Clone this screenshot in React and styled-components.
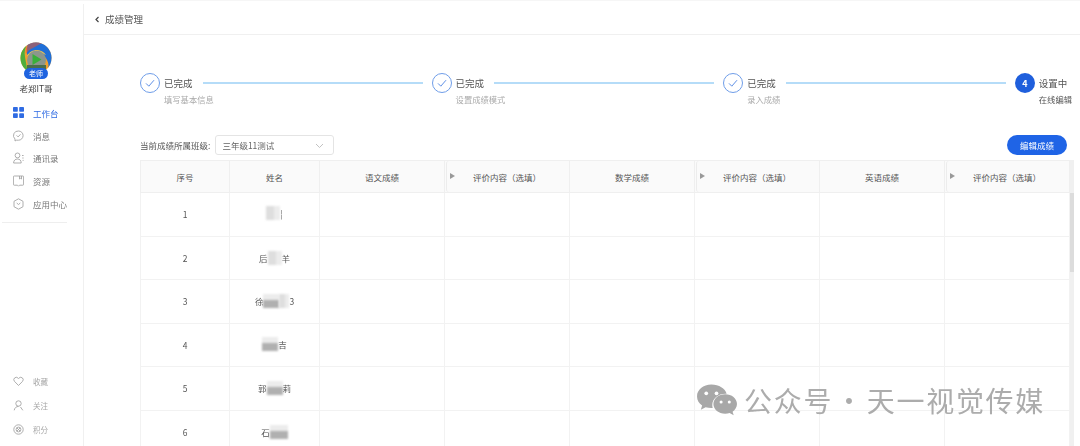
import React from 'react';
import styled, { createGlobalStyle } from 'styled-components';

const GlobalStyle = createGlobalStyle`
  html, body { margin: 0; padding: 0; height: 100%; background: #fff; overflow: hidden; }
  body { font-family: "Noto Sans CJK SC", "Noto Sans", sans-serif; color: #555; }
`;

const Page = styled.div`
  position: relative;
  display: flex;
  width: 1080px;
  height: 446px;
  box-sizing: border-box;
  padding-top: 3px;
  overflow: hidden;
  border-top: 1px solid #f6f6f6;
  filter: blur(0.35px);
`;

const Sidebar = styled.aside`
  width: 84px;
  flex: none;
  display: flex;
  flex-direction: column;
  border-right: 1px solid #f0f0f0;
  box-sizing: border-box;
  padding-top: 38px;
`;

const AvatarWrap = styled.div`
  position: relative;
  width: 32px;
  height: 36px;
  margin: 0 auto 0 20px;
`;

const RoleBadge = styled.span`
  position: absolute;
  left: 4px;
  top: 26px;
  width: 24px;
  height: 11px;
  border-radius: 6px;
  background: #1f64e0;
  color: #fff;
  font-size: 7px;
  line-height: 11px;
  text-align: center;
`;

const UserName = styled.div`
  margin-top: 3px;
  width: 72px;
  text-align: center;
  font-size: 8.5px;
  line-height: 14px;
  color: #444;
`;

const Nav = styled.nav`
  display: flex;
  flex-direction: column;
  margin-top: 6.5px;
  padding-bottom: 7px;
  margin-right: 16px;
  margin-left: 2px;
  border-bottom: 1px solid #eee;
`;

const NavItem = styled.div`
  display: flex;
  align-items: center;
  gap: 9px;
  height: 22.7px;
  padding-left: 11px;
  font-size: 8.5px;
  color: ${p => (p.$active ? '#2f6be3' : '#777')};
  svg { flex: none; }
`;

const BottomNav = styled.nav`
  margin-top: auto;
  display: flex;
  flex-direction: column;
  padding: 0 0 5px 13px;
`;

const BottomItem = styled.div`
  display: flex;
  align-items: center;
  gap: 9px;
  height: 24px;
  font-size: 7.5px;
  color: #a5a5a5;
`;

const Main = styled.main`
  flex: 1;
  min-width: 0;
  display: flex;
  flex-direction: column;
`;

const TopBar = styled.header`
  height: 31px;
  flex: none;
  display: flex;
  align-items: center;
  gap: 3px;
  padding-left: 9px;
  box-sizing: border-box;
  border-bottom: 1px solid #f0f0f0;
  font-size: 9.5px;
  color: #555;
`;

const Content = styled.div`
  padding: 38px 0 0 56px;
  width: 996px;
  box-sizing: border-box;
`;

const Steps = styled.div`
  display: flex;
  align-items: flex-start;
  width: 932px;
  height: 62px;
`;

const Step = styled.div`
  display: flex;
  flex: ${p => (p.$last ? 'none' : '1')};
  gap: 4px;
  margin-right: ${p => (p.$last ? '0' : '9px')};
`;

const StepCircle = styled.span`
  flex: none;
  width: 20px;
  height: 20px;
  box-sizing: border-box;
  border-radius: 50%;
  border: ${p => (p.$current ? 'none' : '1px solid #6f9de8')};
  background: ${p => (p.$current ? '#1f5fdc' : '#fff')};
  color: #fff;
  font-size: 9px;
  font-weight: 700;
  display: flex;
  align-items: center;
  justify-content: center;
`;

const StepBody = styled.div`
  flex: 1;
  min-width: 0;
`;

const StepHead = styled.div`
  display: flex;
  align-items: center;
  gap: 10px;
  height: 20px;
  font-size: 9.5px;
  color: #555;
  white-space: nowrap;
`;

const StepLine = styled.i`
  flex: 1;
  height: 2px;
  background: #b5dcf8;
`;

const StepNote = styled.div`
  font-size: 8.3px;
  line-height: 12px;
  white-space: nowrap;
  color: ${p => (p.$current ? '#555' : '#aaa')};
`;

const Toolbar = styled.div`
  display: flex;
  align-items: center;
  width: 927px;
  height: 20px;
  font-size: 8.5px;
  color: #555;
`;

const SelectBox = styled.div`
  width: 119px;
  height: 20px;
  margin-left: 5px;
  box-sizing: border-box;
  display: flex;
  align-items: center;
  justify-content: space-between;
  padding: 0 9px 0 6px;
  border: 1px solid #e4e4e4;
  border-radius: 3px;
  color: #666;
`;

const EditButton = styled.button`
  margin-left: auto;
  width: 60px;
  height: 20px;
  padding: 0;
  border: none;
  border-radius: 10px;
  background: #1f64e6;
  color: #fff;
  font: inherit;
  font-size: 8.5px;
`;

const TableWrap = styled.div`
  display: flex;
  width: 933px;
  margin-top: 5px;
`;

const Table = styled.table`
  width: 929px;
  flex: none;
  border-collapse: collapse;
  table-layout: fixed;
`;

const ScrollTrack = styled.div`
  width: 4px;
  flex: none;
  background: #f0f0f0;
`;

const ScrollThumb = styled.div`
  height: 79px;
  margin-top: 33px;
  background: #dcdcdc;
`;

const Th = styled.th`
  position: relative;
  height: 31px;
  padding: 0;
  background: #fafafa;
  border: 1px solid #efefef;
  font-size: 8.5px;
  font-weight: 400;
  color: #555;
`;

const FoldEdge = styled.span`
  position: absolute;
  left: 1px;
  top: 0;
  bottom: 0;
  width: 6px;
  border-left: 1px solid #ececec;
  border-radius: 3px 0 0 3px;
`;

const Caret = styled.span`
  position: absolute;
  left: 5px;
  top: 12px;
  width: 0;
  height: 0;
  border-left: 5px solid #999;
  border-top: 3.5px solid transparent;
  border-bottom: 3.5px solid transparent;
`;

const Td = styled.td`
  height: 42.5px;
  padding: 0;
  border: 1px solid #f2f2f2;
  text-align: center;
  font-size: 8.5px;
  color: #555;
`;

const NameCell = styled.div`
  display: inline-flex;
  align-items: center;
  justify-content: center;
`;

const Mosaic = styled.span`
  display: inline-block;
  width: ${p => p.$w}px;
  height: 14px;
  background: ${p => p.$dark
    ? 'linear-gradient(#ececec 45%, #b0b0b0 45%)'
    : 'linear-gradient(90deg, #dedede 60%, #ececec 60%)'};
  filter: blur(0.8px);
`;

const Watermark = styled.div`
  position: absolute;
  left: 696px;
  top: 381px;
  display: flex;
  align-items: center;
  gap: 6px;
  font-size: 28px;
  line-height: 36px;
  letter-spacing: 1.7px;
  color: #acacac;
  white-space: nowrap;
`;

const Dot = styled.span`
  margin: 0 2px;
`;

const NAV = [
  { label: '工作台', icon: 'grid', active: true },
  { label: '消息', icon: 'msg' },
  { label: '通讯录', icon: 'user' },
  { label: '资源', icon: 'res' },
  { label: '应用中心', icon: 'hex' },
];

const NavIcon = ({ type }) => {
  if (type === 'grid') {
    return (
      <svg width="11" height="11" viewBox="0 0 11 11" fill="#2f6be3">
        <rect width="4.8" height="4.8" rx="0.8" />
        <rect x="6.2" width="4.8" height="4.8" rx="0.8" />
        <rect y="6.2" width="4.8" height="4.8" rx="0.8" />
        <rect x="6.2" y="6.2" width="4.8" height="4.8" rx="0.8" />
      </svg>
    );
  }
  const s = { fill: 'none', stroke: '#a5a5a5', strokeWidth: 0.9 };
  return (
    <svg width="11" height="12" viewBox="0 0 11 12" {...s}>
      {type === 'msg' && (
        <>
          <path d="M5.5 1a4.6 4.6 0 0 1 0 9.2H3.4L2 11V9A4.6 4.6 0 0 1 5.5 1z" />
          <path d="M3.6 5.4l1.5 1.5 2.4-2.6" />
        </>
      )}
      {type === 'user' && (
        <>
          <circle cx="4.5" cy="3.4" r="2.4" />
          <path d="M.6 11c0-2.6 1.7-4 3.9-4s3.7 1.4 3.7 4z" />
          <path d="M9 3.5h1.6M9.3 6h1.3M9.6 8.4h1" />
        </>
      )}
      {type === 'res' && (
        <>
          <path d="M1.2 1h8.6a.8.8 0 0 1 .8.8v7.6a.8.8 0 0 1-.8.8H6.5l-1 1-1-1H1.2a.8.8 0 0 1-.8-.8V1.8a.8.8 0 0 1 .8-.8z" />
          <path d="M6.5 1v3l1-.7 1 .7V1" />
        </>
      )}
      {type === 'hex' && (
        <>
          <path d="M5.5.8l4.5 2.5v5.4l-4.5 2.5-4.5-2.5V3.3z" />
          <path d="M3.7 5l1.8 1.5L7.3 5" />
        </>
      )}
    </svg>
  );
};

const BottomIcon = ({ type }) => {
  const s = { fill: 'none', stroke: '#a5a5a5', strokeWidth: 0.9 };
  return (
    <svg width="11" height="11" viewBox="0 0 11 11" {...s}>
      {type === 'heart' && (
        <path d="M5.5 9.5L1.500 5.400a2.500 2.500 0 0 1 0-3.400 2.600 2.600 0 0 1 3.500 0l.5.500.5-.5a2.600 2.600 0 0 1 3.500 0 2.500 2.500 0 0 1 0 3.400z" />
      )}
      {type === 'person' && (
        <>
          <circle cx="5.5" cy="3.5" r="2.7" />
          <path d="M1.2 10.3c.4-2.4 2.1-3.900 4.300-3.900M7.500 7l2.300 3.300" />
        </>
      )}
      {type === 'points' && (
        <>
          <circle cx="5.5" cy="5.5" r="4.7" />
          <circle cx="5.5" cy="5.5" r="2.4" />
          <path d="M3.8 3.8l3.4 3.4M7.2 3.8L3.8 7.2" />
        </>
      )}
    </svg>
  );
};

const Logo = () => (
  <svg width="32" height="32" viewBox="0 0 32 32">
    <defs>
      <clipPath id="logoClip">
        <circle cx="16" cy="16" r="15.5" />
      </clipPath>
    </defs>
    <g clipPath="url(#logoClip)">
      <rect width="32" height="32" fill="#f0a030" />
      <path d="M0 32V12C1 7 4 3 8 1c-3 4-4 9-3 14l3 17z" fill="#4fae3c" />
      <path d="M8 0h14c5 2 8 6 10 11v21h-6c2-3 4-9 1-14-2-4-6-7-12-7-3 0-6 .6-8 2 0-5 0-9 1-13z" fill="#1f6fd8" />
      <path d="M9 1c4-1.5 9-1.5 13 0L13 6C10 7 8 9 6 12 5 8 6 4 9 1z" fill="#e8552e" opacity="0.55" />
      <path d="M7 14c2-4 6-6 10-6 4 .2 7 2 9 5-5-2.5-12-2.5-19 1z" fill="#f5c84a" />
      <circle cx="16.5" cy="18" r="9.5" fill="#8c968c" />
      <path d="M12.5 12l9 5.5-9 5.500z" fill="#39b03a" />
      <rect x="7" y="23" width="19" height="9" fill="#4c6e4c" />
    </g>
  </svg>
);

const Check = () => (
  <svg width="12" height="12" viewBox="0 0 12 12" fill="none" stroke="#5f90e6" strokeWidth="1">
    <path d="M2 6.4l2.800 2.800L10 3.200" />
  </svg>
);

const Chevron = ({ color = '#bbb', dir = 'down', weight = 0.9 }) => (
  <svg width="9" height="9" viewBox="0 0 9 9" fill="none" stroke={color} strokeWidth={weight}>
    <path d={dir === 'down' ? 'M1 3l3.500 3.500L8 3' : 'M5.500 2L3 4.500 5.500 7'} />
  </svg>
);

const WeChat = () => (
  <svg width="42" height="35" viewBox="0 0 41 33" fill="#a8a8a8">
    <path d="M15 1C7 1 1 6 1 12.500c0 3.700 2 6.800 5 9l-1.300 4 4.700-2.500c1.800.5 3.700.8 5.600.8h1.300a10.500 10.500 0 0 1-.4-3c0-6.200 5.800-11 13-11h1C28.500 5 22.500 1 15 1z" />
    <path d="M40 20c0-5.400-5.200-9.500-11.500-9.500S17 14.600 17 20s5.200 9.500 11.500 9.500c1.500 0 3-.3 4.300-.7l4 2.200-1.100-3.500C38.200 25.800 40 23 40 20z" />
    <g fill="#fff">
      <circle cx="10" cy="9.500" r="1.800" />
      <circle cx="20" cy="9.500" r="1.800" />
      <circle cx="24.500" cy="18" r="1.500" />
      <circle cx="32.500" cy="18" r="1.500" />
    </g>
  </svg>
);

const STEPS = [
  { note: '填写基本信息' },
  { note: '设置成绩模式' },
  { note: '录入成绩' },
];

const COLS = [
  { label: '序号', w: 89 },
  { label: '姓名', w: 90 },
  { label: '语文成绩', w: 125 },
  { label: '评价内容（选填）', w: 125, fold: true },
  { label: '数学成绩', w: 125 },
  { label: '评价内容（选填）', w: 125, fold: true },
  { label: '英语成绩', w: 125 },
  { label: '评价内容（选填）', w: 125, fold: true },
];

// 姓名列在原图里打了码，用灰块代替
const ROWS = [
  { id: 1, pre: '', masks: [{ w: 14 }], post: '¦' },
  { id: 2, pre: '后', masks: [{ w: 14 }], post: '羊' },
  { id: 3, pre: '徐', masks: [{ w: 16, dark: true }, { w: 10 }], post: '3' },
  { id: 4, pre: '', masks: [{ w: 16, dark: true }], post: '吉' },
  { id: 5, pre: '郭', masks: [{ w: 16, dark: true }], post: '莉' },
  { id: 6, pre: '石', masks: [{ w: 18, dark: true }], post: '' },
];

export default function App() {
  return (
    <>
      <GlobalStyle />
      <Page>
        <Sidebar>
          <AvatarWrap>
            <Logo />
            <RoleBadge>老师</RoleBadge>
          </AvatarWrap>
          <UserName>老郑IT哥</UserName>
          <Nav>
            {NAV.map(item => (
              <NavItem key={item.label} $active={item.active}>
                <NavIcon type={item.icon} />
                {item.label}
              </NavItem>
            ))}
          </Nav>
          <BottomNav>
            <BottomItem><BottomIcon type="heart" />收藏</BottomItem>
            <BottomItem><BottomIcon type="person" />关注</BottomItem>
            <BottomItem><BottomIcon type="points" />积分</BottomItem>
          </BottomNav>
        </Sidebar>
        <Main>
          <TopBar>
            <Chevron color="#444" dir="left" weight={1.2} />
            成绩管理
          </TopBar>
          <Content>
            <Steps>
              {STEPS.map(step => (
                <Step key={step.note}>
                  <StepCircle><Check /></StepCircle>
                  <StepBody>
                    <StepHead>已完成<StepLine /></StepHead>
                    <StepNote>{step.note}</StepNote>
                  </StepBody>
                </Step>
              ))}
              <Step $last>
                <StepCircle $current>4</StepCircle>
                <StepBody>
                  <StepHead>设置中</StepHead>
                  <StepNote $current>在线编辑</StepNote>
                </StepBody>
              </Step>
            </Steps>
            <Toolbar>
              当前成绩所属班级:
              <SelectBox>三年级11测试<Chevron /></SelectBox>
              <EditButton>编辑成绩</EditButton>
            </Toolbar>
            <TableWrap>
              <Table>
                <colgroup>
                  {COLS.map((col, i) => <col key={i} style={{ width: col.w }} />)}
                </colgroup>
                <thead>
                  <tr>
                    {COLS.map((col, i) => (
                      <Th key={i}>
                        {col.fold && <FoldEdge />}
                        {col.fold && <Caret />}
                        {col.label}
                      </Th>
                    ))}
                  </tr>
                </thead>
                <tbody>
                  {ROWS.map(row => (
                    <tr key={row.id}>
                      <Td>{row.id}</Td>
                      <Td>
                        <NameCell>
                          {row.pre}
                          {row.masks.map((m, i) => <Mosaic key={i} $w={m.w} $dark={m.dark} />)}
                          {row.post}
                        </NameCell>
                      </Td>
                      {COLS.slice(2).map((col, i) => <Td key={i} />)}
                    </tr>
                  ))}
                </tbody>
              </Table>
              <ScrollTrack><ScrollThumb /></ScrollTrack>
            </TableWrap>
          </Content>
        </Main>
        <Watermark>
          <WeChat />
          <span>公众号<Dot>·</Dot>天一视觉传媒</span>
        </Watermark>
      </Page>
    </>
  );
}
